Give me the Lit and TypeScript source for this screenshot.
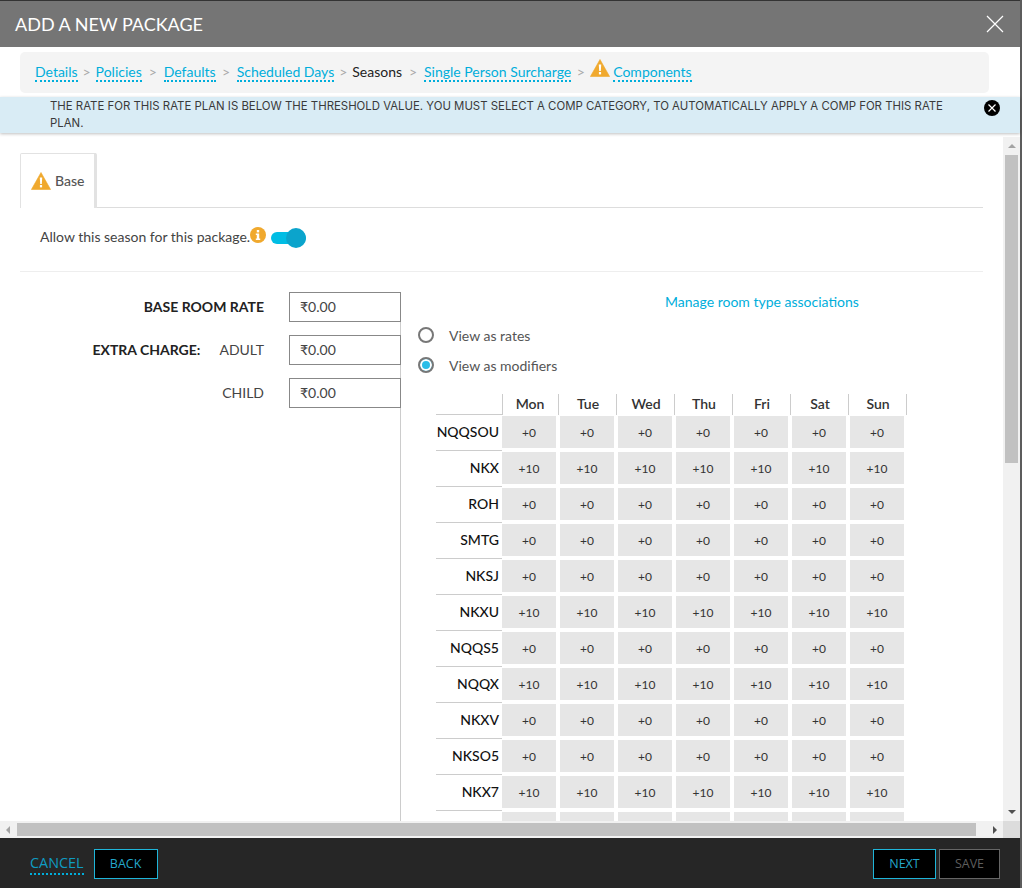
import { LitElement, html, css, svg } from 'lit';
import { customElement, state } from 'lit/decorators.js';

const warnIcon = svg`<svg class="warn" viewBox="0 0 20 18" width="20" height="18">
  <path d="M10 0.5 L19.6 17.5 L0.4 17.5 Z" fill="#f0a92e" stroke="#f0a92e" stroke-width="0.6" stroke-linejoin="round"/>
  <path d="M8.8 5.5 H11.2 L10.8 12 H9.2 Z" fill="#fff"/>
  <rect x="8.9" y="13" width="2.2" height="2.4" fill="#fff"/>
</svg>`;

const DAYS = ['Mon', 'Tue', 'Wed', 'Thu', 'Fri', 'Sat', 'Sun'];

const ROWS: { code: string; mod: string }[] = [
  { code: 'NQQSOU', mod: '+0' },
  { code: 'NKX', mod: '+10' },
  { code: 'ROH', mod: '+0' },
  { code: 'SMTG', mod: '+0' },
  { code: 'NKSJ', mod: '+0' },
  { code: 'NKXU', mod: '+10' },
  { code: 'NQQS5', mod: '+0' },
  { code: 'NQQX', mod: '+10' },
  { code: 'NKXV', mod: '+0' },
  { code: 'NKSO5', mod: '+0' },
  { code: 'NKX7', mod: '+10' },
  { code: '', mod: '' },
];

// gap is the room the ">" takes after each step
const STEPS = [
  { label: 'Details', gap: 18 },
  { label: 'Policies', gap: 22 },
  { label: 'Defaults', gap: 21 },
  { label: 'Scheduled Days', gap: 18 },
  { label: 'Seasons', gap: 22, current: true },
  { label: 'Single Person Surcharge', gap: 19 },
];

@customElement('app-root')
export class AppRoot extends LitElement {
  @state() steps = STEPS;

  static styles = css`
    :host {
      display: block;
      width: 1022px;
      height: 888px;
      overflow: hidden;
      background: #5c5c5c;
      font-family: 'Lato', sans-serif;
      font-size: 14px;
      color: #333;
    }

    .modal {
      display: flex;
      flex-direction: column;
      width: 1020px;
      height: 888px;
      background: #fff;
    }

    .topline {
      height: 1px;
      background: #333;
      flex: none;
    }

    .header {
      flex: none;
      height: 46px;
      background: #757575;
      display: flex;
      align-items: center;
      justify-content: space-between;
      padding: 0 16px 0 15px;
      color: #fff;
      font-size: 18px;
    }

    .close {
      display: block;
    }

    .crumb-wrap {
      flex: none;
      height: 50px;
      padding: 5px 31px 4px 20px;
      box-sizing: border-box;
    }

    .crumbs {
      height: 41px;
      background: #f4f4f4;
      border-radius: 5px;
      display: flex;
      align-items: center;
      padding: 0 15px;
    }

    .crumbs a {
      color: #00aedb;
      border-bottom: 2px dotted #00aedb;
      line-height: 17px;
    }

    .crumbs .sep {
      color: #aaa;
      text-align: center;
      margin-bottom: 2px;
    }

    .crumbs .current {
      color: #222;
      margin-bottom: 2px;
    }

    .crumbs .warn {
      margin: -10px 3px 0 0;
    }

    .alert {
      flex: none;
      height: 36px;
      box-sizing: border-box;
      background: #d9ecf5;
      box-shadow: 0 1px 3px rgba(0, 0, 0, 0.25);
      padding: 1px 22px 0 50px;
      position: relative;
      font-family: 'Inter', sans-serif;
      font-size: 11.4px;
      line-height: 17px;
      color: #3a3a3a;
    }

    .alert p {
      margin: 0;
      width: 900px;
    }

    .alert-close {
      position: absolute;
      left: 984px;
      top: 3px;
    }

    .middle {
      flex: 1;
      min-height: 0;
      display: flex;
      flex-direction: column;
      margin-top: 4px;
    }

    .view {
      flex: 1;
      min-height: 0;
      display: flex;
    }

    .content {
      flex: 1;
      min-width: 0;
      overflow: hidden;
      padding: 16px 20px 0 20px;
    }

    .vbar {
      flex: none;
      width: 17px;
      background: #f1f1f1;
      display: flex;
      flex-direction: column;
      align-items: center;
    }

    .vbar .thumb {
      width: 13px;
      height: 308px;
      background: #c1c1c1;
      margin-top: 7px;
    }

    .vbar .up,
    .vbar .down {
      flex: none;
      width: 0;
      height: 0;
      border-left: 4px solid transparent;
      border-right: 4px solid transparent;
    }

    .vbar .up {
      margin-top: 7px;
      border-bottom: 4px solid #a3a3a3;
    }

    .vbar .down {
      margin-top: auto;
      margin-bottom: 7px;
      border-top: 4px solid #505050;
    }

    .hbar {
      flex: none;
      height: 17px;
      background: #f1f1f1;
      display: flex;
      align-items: center;
    }

    .hbar .left,
    .hbar .right {
      flex: none;
      width: 0;
      height: 0;
      border-top: 4px solid transparent;
      border-bottom: 4px solid transparent;
    }

    .hbar .left {
      margin-left: 6px;
      border-right: 4px solid #a3a3a3;
    }

    .hbar .thumb {
      width: 959px;
      height: 13px;
      background: #c1c1c1;
      margin-left: 7px;
    }

    .hbar .right {
      margin-left: 17px;
      border-left: 4px solid #505050;
    }

    .hbar .corner-box {
      align-self: stretch;
      width: 17px;
      margin-left: auto;
      background: #dcdcdc;
    }

    .footer {
      flex: none;
      height: 50px;
      box-sizing: border-box;
      background: #262626;
      display: flex;
      align-items: center;
      padding: 1px 20px 0 30px;
      font-family: 'Open Sans', sans-serif;
    }

    .cancel {
      color: #0f9cc2;
      font-size: 14.4px;
      line-height: 20px;
      border-bottom: 2px dotted #00aedb;
      margin-right: 10px;
    }

    .btn {
      height: 30px;
      box-sizing: border-box;
      background: #000;
      border: 1px solid #1fb5d9;
      color: #23a7cb;
      font-family: inherit;
      font-size: 12.5px;
      padding: 0;
      margin: 0;
    }

    .btn.back {
      width: 64px;
    }

    .btn.next {
      width: 63px;
      margin-left: auto;
    }

    .btn.save {
      width: 61px;
      margin-left: 3px;
      border-color: #666;
      color: #5e5e5e;
    }

    .tabs {
      height: 54px;
      border-bottom: 1px solid #ddd;
    }

    .tab {
      box-sizing: border-box;
      width: 77px;
      height: 55px;
      background: #fff;
      border: 1px solid #e2e2e2;
      border-right-width: 3px;
      border-bottom: none;
      border-radius: 2px 2px 0 0;
      display: flex;
      align-items: center;
      gap: 4px;
      padding-left: 10px;
      color: #555;
      font-weight: 500;
    }

    .tab span {
      margin-bottom: 1px;
    }

    .allow {
      height: 64px;
      box-sizing: border-box;
      border-bottom: 1px solid #eee;
      display: flex;
      align-items: center;
      padding: 0 0 7px 20px;
      color: #444;
    }

    .info {
      margin: -3px 4px 0 0;
    }

    .toggle {
      position: relative;
      width: 35px;
      height: 12px;
      margin: 4px 0 0 1px;
      border-radius: 6px;
      background: #00bde4;
    }

    .toggle span {
      position: absolute;
      right: 0;
      top: -4px;
      width: 20px;
      height: 20px;
      border-radius: 50%;
      background: #0ba4cc;
    }

    .form {
      display: flex;
    }

    .rates {
      flex: none;
      width: 381px;
      box-sizing: border-box;
      border-right: 1px solid #ccc;
      margin-top: 20px;
      height: 540px;
    }

    .rate-row {
      display: flex;
      align-items: center;
      justify-content: flex-end;
      height: 30px;
      margin-bottom: 13px;
      color: #444;
    }

    .rate-row b,
    .rate-row span {
      margin-bottom: 2px;
    }

    .rate-row b {
      color: #222;
      font-size: 14px;
      font-weight: 700;
    }

    .rate-row .extra {
      margin-right: 19px;
    }

    .rate-row input {
      box-sizing: border-box;
      width: 112px;
      height: 30px;
      margin: 0 -1px 0 25px;
      border: 1px solid #888;
      border-radius: 0;
      padding: 0 0 2px 10px;
      font-family: inherit;
      font-size: 14px;
      color: #444;
      background: #fff;
      position: relative;
    }

    .modifiers {
      flex: 1;
      min-width: 0;
      padding-left: 17px;
    }

    .manage {
      display: block;
      margin: 20px 0 0 247px;
      color: #00aedb;
      line-height: 20px;
    }

    .radio {
      display: flex;
      align-items: center;
      height: 30px;
      color: #555;
    }

    .radio.first {
      margin-top: 8px;
    }

    .radio i {
      box-sizing: border-box;
      width: 16px;
      height: 16px;
      margin-right: 15px;
      border: 2px solid #777;
      border-radius: 50%;
      background: #fff;
    }

    .radio i.on {
      background: #29bde8;
      box-shadow: inset 0 0 0 2px #fff;
    }

    .table {
      display: grid;
      grid-template-columns: 62px repeat(7, 54px);
      column-gap: 4px;
      margin: 14px 0 0 18px;
      width: 470px;
    }

    .corner {
      height: 21px;
      margin-right: -5px;
      border-bottom: 1px solid #ccc;
      border-right: 1px solid #ccc;
      box-sizing: border-box;
    }

    .day {
      height: 21px;
      line-height: 19px;
      text-align: center;
      font-size: 14px;
      font-weight: 600;
      color: #333;
      border-right: 1px solid #ccc;
      margin-right: -3px;
    }

    .code {
      height: 36px;
      box-sizing: border-box;
      margin-right: -4px;
      border-bottom: 1px solid #ccc;
      text-align: right;
      padding: 7px 3px 0 0;
      line-height: 20px;
      font-weight: 500;
      color: #111;
    }

    .cell {
      height: 32px;
      margin: 1px 0 3px;
      background: #e6e6e6;
      text-align: center;
      line-height: 34px;
      font-size: 12px;
      color: #333;
    }
  `;

  render() {
    return html`
      <div class="modal">
        <div class="topline"></div>
        <div class="header">
          <span>ADD A NEW PACKAGE</span>
          <svg class="close" width="18" height="18" viewBox="0 0 18 18">
            <path d="M1 1 L17 17 M17 1 L1 17" stroke="#fff" stroke-width="1.2" fill="none" />
          </svg>
        </div>
        <div class="crumb-wrap">
          <div class="crumbs">
            ${this.steps.map(
              (s) => html`
                ${s.current ? html`<span class="current">${s.label}</span>` : html`<a>${s.label}</a>`}
                <span class="sep" style="width:${s.gap}px">&gt;</span>
              `
            )}
            ${warnIcon}<a>Components</a>
          </div>
        </div>
        <div class="alert">
          <p>THE RATE FOR THIS RATE PLAN IS BELOW THE THRESHOLD VALUE. YOU MUST SELECT A COMP CATEGORY, TO AUTOMATICALLY APPLY A COMP FOR THIS RATE PLAN.</p>
          <svg class="alert-close" width="16" height="16" viewBox="0 0 16 16">
            <circle cx="8" cy="8" r="8" fill="#000" />
            <path d="M4.5 4.5 L11.5 11.5 M11.5 4.5 L4.5 11.5" stroke="#fff" stroke-width="1.2" />
          </svg>
        </div>
        <div class="middle">
          <div class="view">
            <div class="content">
              <div class="tabs">
                <div class="tab">${warnIcon}<span>Base</span></div>
              </div>
              <div class="allow">
                <span>Allow this season for this package.</span>
                <svg class="info" width="16" height="16" viewBox="0 0 16 16">
                  <circle cx="8" cy="8" r="8" fill="#f0a92e" />
                  <rect x="6.8" y="3" width="2.4" height="2.4" fill="#fff" />
                  <path d="M5.8 6.6 H9.2 V11.6 H10.2 V13 H5.8 V11.6 H6.8 V8 H5.8 Z" fill="#fff" />
                </svg>
                <div class="toggle"><span></span></div>
              </div>
              <div class="form">
                <div class="rates">
                  <div class="rate-row"><b>BASE ROOM RATE</b><input .value=${'₹0.00'} /></div>
                  <div class="rate-row"><b class="extra">EXTRA CHARGE:</b><span>ADULT</span><input .value=${'₹0.00'} /></div>
                  <div class="rate-row"><span>CHILD</span><input .value=${'₹0.00'} /></div>
                </div>
                <div class="modifiers">
                  <a class="manage">Manage room type associations</a>
                  <div class="radio first"><i></i>View as rates</div>
                  <div class="radio"><i class="on"></i>View as modifiers</div>
                  <div class="table">
                    <div class="corner"></div>
                    ${DAYS.map((d) => html`<div class="day">${d}</div>`)}
                    ${ROWS.map(
                      (r) => html`
                        <div class="code">${r.code}</div>
                        ${DAYS.map(() => html`<div class="cell">${r.mod}</div>`)}
                      `
                    )}
                  </div>
                </div>
              </div>
            </div>
            <div class="vbar">
              <div class="up"></div>
              <div class="thumb"></div>
              <div class="down"></div>
            </div>
          </div>
          <div class="hbar">
            <div class="left"></div>
            <div class="thumb"></div>
            <div class="right"></div>
            <div class="corner-box"></div>
          </div>
        </div>
        <div class="footer">
          <a class="cancel">CANCEL</a>
          <button class="btn back">BACK</button>
          <button class="btn next">NEXT</button>
          <button class="btn save">SAVE</button>
        </div>
      </div>
    `;
  }
}
